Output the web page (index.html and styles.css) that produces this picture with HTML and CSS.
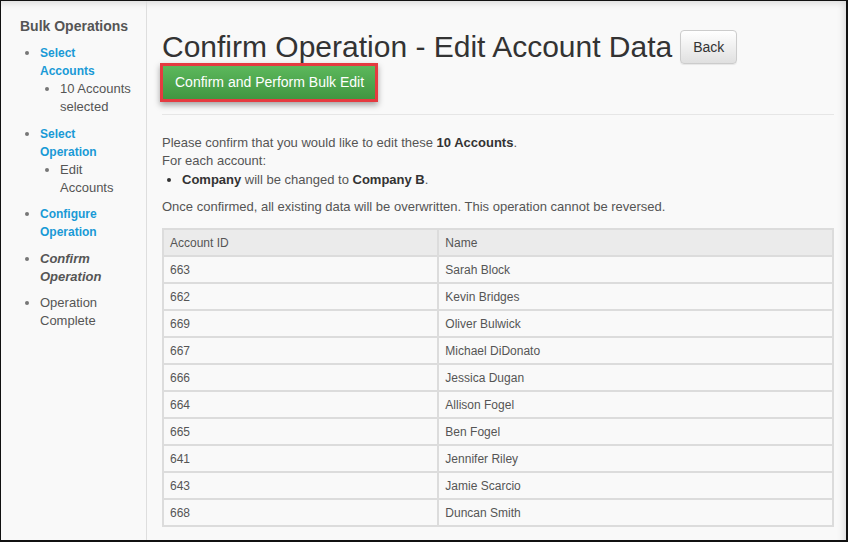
FILE: index.html
```html
<!DOCTYPE html>
<html>
<head>
<meta charset="utf-8">
<link rel="stylesheet" href="styles.css">
</head>
<body>
<div class="frame">
  <aside class="sidebar">
    <div class="side-title">Bulk Operations</div>
    <ul class="steps">
      <li><a class="step-link">Select<br>Accounts</a>
        <ul class="sub"><li>10 Accounts<br>selected</li></ul>
      </li>
      <li><a class="step-link">Select<br>Operation</a>
        <ul class="sub"><li>Edit<br>Accounts</li></ul>
      </li>
      <li><a class="step-link">Configure<br>Operation</a></li>
      <li class="current">Confirm<br>Operation</li>
      <li class="pending">Operation<br>Complete</li>
    </ul>
  </aside>
  <main class="content">
    <div class="title-row">
      <h1 class="title">Confirm Operation - Edit Account Data</h1>
      <button class="btn-back">Back</button>
    </div>
    <div class="highlight">
      <button class="btn-confirm">Confirm and Perform Bulk Edit</button>
    </div>
    <hr class="divider">
    <p class="line">Please confirm that you would like to edit these <b>10 Accounts</b>.</p>
    <p class="line">For each account:</p>
    <ul class="changes"><li><b>Company</b> will be changed to <b>Company B</b>.</li></ul>
    <p class="line warn">Once confirmed, all existing data will be overwritten. This operation cannot be reversed.</p>
    <table class="accounts">
      <thead><tr><th class="col-id">Account ID</th><th>Name</th></tr></thead>
      <tbody>
        <tr><td>663</td><td>Sarah Block</td></tr>
        <tr><td>662</td><td>Kevin Bridges</td></tr>
        <tr><td>669</td><td>Oliver Bulwick</td></tr>
        <tr><td>667</td><td>Michael DiDonato</td></tr>
        <tr><td>666</td><td>Jessica Dugan</td></tr>
        <tr><td>664</td><td>Allison Fogel</td></tr>
        <tr><td>665</td><td>Ben Fogel</td></tr>
        <tr><td>641</td><td>Jennifer Riley</td></tr>
        <tr><td>643</td><td>Jamie Scarcio</td></tr>
        <tr><td>668</td><td>Duncan Smith</td></tr>
      </tbody>
    </table>
  </main>
</div>
</body>
</html>
```
FILE: styles.css
```css
html, body {
  margin: 0;
  padding: 0;
  background: #fff;
}
body {
  font-family: "Liberation Sans", Arial, sans-serif;
  color: #555;
}
.frame {
  width: 848px;
  height: 542px;
  box-sizing: border-box;
  border-style: solid;
  border-color: #111;
  border-width: 1px 2px 2px 1px;
  background: #f9f9f9;
  display: flex;
  overflow: hidden;
  box-shadow: inset -6px 6px 7px -4px rgba(0,0,0,0.13);
}
.sidebar {
  width: 146px;
  flex: none;
  box-sizing: border-box;
  border-right: 1px solid #dedede;
  padding: 16px 10px 0 19px;
}
.side-title {
  font-size: 14px;
  font-weight: bold;
  color: #555;
  line-height: 18px;
  margin-bottom: 9px;
}
.steps {
  margin: 0;
  padding-left: 20px;
  list-style: disc;
  font-size: 13px;
  line-height: 18px;
  color: #555;
}
.steps > li {
  margin-bottom: 8.5px;
}
.steps li::marker {
  color: #777;
}
.step-link {
  color: #1a9ad6;
  font-weight: bold;
  font-size: 12px;
  text-decoration: none;
}
.sub {
  margin: 0;
  padding-left: 20px;
  list-style: disc;
}
.current {
  font-weight: bold;
  font-style: italic;
}
.content {
  flex: 1;
  padding: 29px 12px 0 15px;
  min-width: 0;
}
.title-row {
  display: flex;
  align-items: center;
}
.title {
  margin: 0;
  font-size: 30px;
  line-height: 34px;
  font-weight: normal;
  color: #333;
}
.btn-back {
  margin-left: 8px;
  font-family: "Liberation Sans", Arial, sans-serif;
  font-size: 14px;
  color: #333;
  height: 34px;
  padding: 0 12px;
  border: 1px solid #ccc;
  border-radius: 4px;
  background: linear-gradient(#ffffff, #e0e0e0);
  box-shadow: inset 0 1px 0 rgba(255,255,255,0.15), 0 1px 1px rgba(0,0,0,0.075);
}
.highlight {
  display: inline-block;
  margin-left: -2px;
  margin-top: -1px;
  border: 3px solid #e53a40;
  box-shadow: 0 3px 6px rgba(0,0,0,0.35);
  line-height: 0;
}
.btn-confirm {
  font-family: "Liberation Sans", Arial, sans-serif;
  font-size: 14px;
  line-height: 17px;
  color: #fff;
  padding: 8px 11px 8px 12px;
  border: 0;
  border-radius: 0;
  background: linear-gradient(#5cb85c, #419641);
}
.divider {
  border: 0;
  border-top: 1px solid #e6e6e6;
  margin: 12px 0 19px 0;
}
.line {
  margin: 0;
  font-size: 13px;
  line-height: 18px;
}
.line b, .changes b {
  color: #333;
}
.changes {
  margin: 0 0 9px 0;
  padding-left: 20px;
  font-size: 13px;
  line-height: 19px;
}
.changes li::marker {
  color: #333;
}
.warn {
  margin-bottom: 12px;
}
.accounts {
  width: 100%;
  border-collapse: collapse;
  font-size: 12px;
  color: #555;
}
.accounts th, .accounts td {
  border: 2px solid #dcdcdc;
  text-align: left;
  font-weight: normal;
  padding: 0 6px;
  height: 25px;
}
.accounts th {
  background: #ebebeb;
}
.col-id {
  width: 41.1%;
}
```
